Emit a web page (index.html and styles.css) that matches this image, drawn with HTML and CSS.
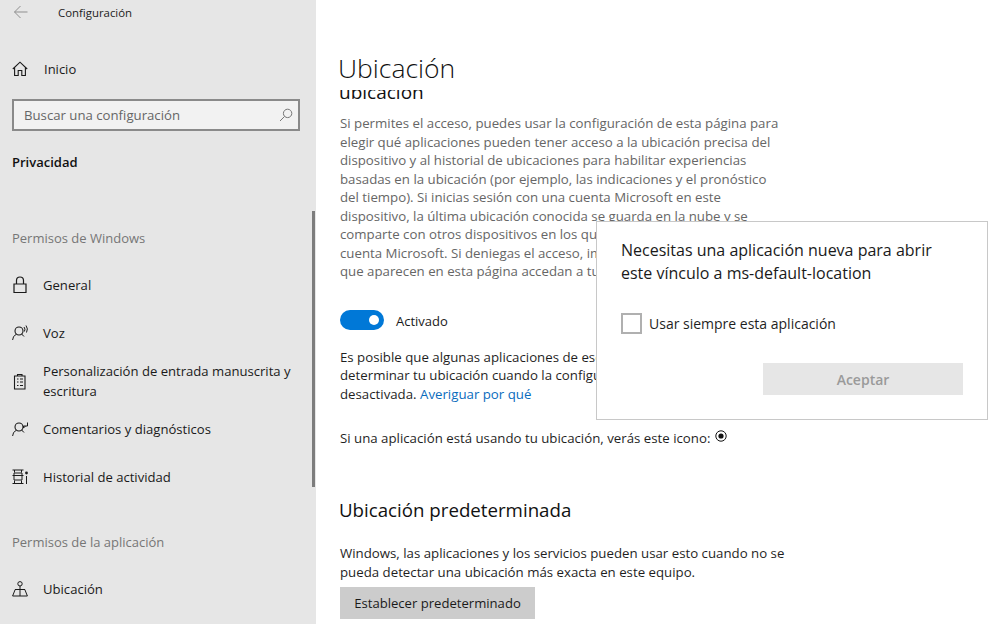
FILE: index.html
```html
<!DOCTYPE html>
<html lang="es">
<head>
<meta charset="utf-8">
<title>Configuración</title>
<link rel="stylesheet" href="styles.css">
</head>
<body>
<div class="app">
  <aside class="sidebar">
    <div class="titlebar">
      <svg class="back" width="16" height="14" viewBox="0 0 16 14"><path d="M14.5 7H1.5M7.5 1 1.5 7l6 6" fill="none" stroke="#8f8f8f" stroke-width="1"/></svg>
      <span class="apptitle">Configuración</span>
    </div>
    <a class="home">
      <svg class="ico" width="16" height="16" viewBox="0 0 16 16"><path d="M.8 8 8 1.2 15.2 8M2.6 6.4V14.5H6.2V9.5H9.8V14.5H13.4V6.4" fill="none" stroke="#1a1a1a" stroke-width="1.1"/></svg>
      <span>Inicio</span>
    </a>
    <div class="search">
      <span>Buscar una configuración</span>
      <svg width="14" height="14" viewBox="0 0 14 14"><circle cx="8.6" cy="5.4" r="4.2" fill="none" stroke="#777" stroke-width="1"/><path d="M5.6 8.4 1 13" stroke="#777" stroke-width="1"/></svg>
    </div>
    <div class="section-name">Privacidad</div>
    <div class="group group-first">Permisos de Windows</div>
    <a class="item item-general">
      <svg class="ico" width="16" height="18" viewBox="0 0 16 18"><path d="M2 8H14V16.5H2ZM4.5 8V4.5A3.5 3.5 0 0 1 11.5 4.5V8" fill="none" stroke="#1a1a1a" stroke-width="1.2"/></svg>
      <span>General</span>
    </a>
    <a class="item item-voz">
      <svg class="ico" width="16" height="16" viewBox="0 0 16 16"><circle cx="7" cy="6" r="4" fill="none" stroke="#1a1a1a" stroke-width="1.1"/><path d="M.6 15A6.5 6.5 0 0 1 4.4 9.2M9.6 9.2A6.5 6.5 0 0 1 12 11.5M12 2A4 4 0 0 1 12.4 6.5M14 .5A6.5 6.5 0 0 1 14.5 7.5" fill="none" stroke="#1a1a1a" stroke-width="1"/></svg>
      <span>Voz</span>
    </a>
    <a class="item item-ink">
      <svg class="ico" width="16" height="17" viewBox="0 0 16 17"><path d="M2.5 3H13V16H2.5ZM5.5 3V1.5H10V3M5 6H6.5M8 6H11M5 9H6.5M8 9H11M5 12.5H6.5M8 12.5H11" fill="none" stroke="#1a1a1a" stroke-width="1.1"/></svg>
      <span>Personalización de entrada manuscrita y escritura</span>
    </a>
    <a class="item item-feedback">
      <svg class="ico" width="16" height="16" viewBox="0 0 16 16"><circle cx="7" cy="6" r="4" fill="none" stroke="#1a1a1a" stroke-width="1.1"/><path d="M.6 15A6.5 6.5 0 0 1 4.4 9.2M9.6 9.2A6.5 6.5 0 0 1 12 11.5M11.5 5H15.5V1.5M11.5 5V7L13.5 5" fill="none" stroke="#1a1a1a" stroke-width="1"/></svg>
      <span>Comentarios y diagnósticos</span>
    </a>
    <a class="item item-history">
      <svg class="ico" width="16" height="16" viewBox="0 0 16 16"><path d="M.5 1H11.5M2.5 1V3.5M9.5 1V3.5M2 4H10V11H2ZM.5 6.5H11.5M.5 14.5H11.5M2.5 11.5V14.5M9.5 11.5V14.5M14.5 7V15" fill="none" stroke="#1a1a1a" stroke-width="1"/><circle cx="14.5" cy="4" r="1.4" fill="#1a1a1a"/></svg>
      <span>Historial de actividad</span>
    </a>
    <div class="group group-app">Permisos de la aplicación</div>
    <a class="item item-loc">
      <svg class="ico" width="16" height="16" viewBox="0 0 16 16"><circle cx="8" cy="2.8" r="2.2" fill="none" stroke="#1a1a1a" stroke-width="1"/><path d="M8 5V15M3 8.5H13M3.2 8.5.6 15H15.4L12.8 8.5" fill="none" stroke="#1a1a1a" stroke-width="1"/></svg>
      <span>Ubicación</span>
    </a>
    <div class="scrollbar"></div>
  </aside>
  <main class="main">
    <h1 class="page-title">Ubicación</h1>
    <div class="scroller">
      <div class="content">
        <h2 class="cut-heading">ubicación</h2>
        <p class="para muted para-intro">Si permites el acceso, puedes usar la configuración de esta página para<br>elegir qué aplicaciones pueden tener acceso a la ubicación precisa del<br>dispositivo y al historial de ubicaciones para habilitar experiencias<br>basadas en la ubicación (por ejemplo, las indicaciones y el pronóstico<br>del tiempo). Si inicias sesión con una cuenta Microsoft en este<br>dispositivo, la última ubicación conocida se guarda en la nube y se<br>comparte con otros dispositivos en los que hayas iniciado sesión con tu<br>cuenta Microsoft. Si deniegas el acceso, impides que las aplicaciones<br>que aparecen en esta página accedan a tu ubicación.</p>
        <div class="toggle-row">
          <span class="toggle"><span class="knob"></span></span>
          <span class="toggle-label">Activado</span>
        </div>
        <p class="para para-note">Es posible que algunas aplicaciones de escritorio puedan seguir<br>determinar tu ubicación cuando la configuración esté<br>desactivada. <a class="link">Averiguar por qué</a></p>
        <p class="para para-icon">Si una aplicación está usando tu ubicación, verás este icono:
          <svg class="loc-dot" width="12" height="12" viewBox="0 0 12 12"><circle cx="6" cy="6" r="5.2" fill="none" stroke="#111" stroke-width="1"/><circle cx="6" cy="6" r="2.6" fill="#111"/></svg>
        </p>
        <h2 class="subhead">Ubicación predeterminada</h2>
        <p class="para para-default">Windows, las aplicaciones y los servicios pueden usar esto cuando no se<br>pueda detectar una ubicación más exacta en este equipo.</p>
        <button class="default-btn">Establecer predeterminado</button>
      </div>
    </div>
  </main>
</div>
<div class="dialog">
  <div class="dialog-title">Necesitas una aplicación nueva para abrir este vínculo a ms-default-location</div>
  <label class="check-row"><span class="check"></span><span>Usar siempre esta aplicación</span></label>
  <div class="dialog-foot"><button class="accept">Aceptar</button></div>
</div>
</body>
</html>
```
FILE: styles.css
```css
* { box-sizing: border-box; }
html, body { margin: 0; padding: 0; height: 100%; overflow: hidden; background: #fff; }
body { font-family: "Open Sans", "Noto Sans", sans-serif; font-size: 13px; color: #1a1a1a; }
.app { display: flex; height: 624px; }
.sidebar { position: relative; width: 316px; flex: none; background: #e6e6e6; padding: 0 12px; overflow: hidden; }
.titlebar { display: flex; align-items: center; height: 24px; }
.back { margin: 0 0 0 1px; }
.apptitle { margin-left: 29px; font-size: 11.4px; color: #222; }
.home { display: flex; align-items: center; margin-top: 33px; height: 24px; font-size: 13px; }
.home span { margin-left: 16px; }
.ico { flex: none; }
.search { display: flex; align-items: center; justify-content: space-between; height: 32px; margin-top: 18px; width: 288px; padding: 0 5px 0 10px; background: #f2f2f2; border: 2px solid #8a8a8a; color: #666; font-size: 13.2px; }
.section-name { margin-top: 22px; font-weight: 600; font-size: 13px; color: #111; line-height: 18px; }
.group { color: #767676; font-size: 13px; line-height: 18px; }
.group-first { margin-top: 58px; }
.group-app { margin-top: 46px; }
.item { display: flex; align-items: center; font-size: 13.1px; line-height: 20px; }
.item span { margin-left: 15px; }
.item-general { margin-top: 28px; }
.item-voz { margin-top: 28px; }
.item-ink { margin-top: 18px; }
.item-ink span { width: 258px; }
.item-feedback { margin-top: 18px; }
.item-history { margin-top: 28px; }
.item-loc { margin-top: 28px; }
.scrollbar { position: absolute; right: 1px; top: 211px; width: 3px; height: 276px; background: #7d7d7d; }
.main { flex: 1; padding-left: 22px; min-width: 0; }
.page-title { margin: 0; padding-top: 49px; height: 90px; font-size: 26.5px; font-weight: 300; line-height: 38px; color: #111; }
.scroller { height: 534px; overflow: hidden; padding-left: 1px; }
.content { margin-top: -11px; }
.cut-heading { margin: 0; font-size: 19px; font-weight: 400; line-height: 26px; color: #111; }
.para { margin: 0 0 0 1px; font-size: 13.25px; line-height: 18.5px; color: #1f1f1f; white-space: nowrap; }
.muted { color: #666; }
.para-intro { margin-top: 9px; }
.toggle-row { display: flex; align-items: center; margin: 29px 0 0 1px; height: 20px; }
.toggle { display: flex; align-items: center; justify-content: flex-end; width: 44px; height: 20px; border-radius: 10px; background: #0078d7; padding-right: 5px; }
.knob { width: 10px; height: 10px; border-radius: 50%; background: #fff; }
.toggle-label { margin-left: 12px; font-size: 13px; position: relative; top: 1px; }
.para-note { margin-top: 18.3px; }
.link { color: #0a6cbd; }
.para-icon { margin-top: 25.7px; }
.loc-dot { vertical-align: 1px; margin-left: 1px; }
.subhead { margin: 50px 0 0; font-size: 18.7px; font-weight: 400; line-height: 26px; color: #111; }
.para-default { margin-top: 21px; }
.default-btn { display: block; margin: 6px 0 0 1px; width: 195px; height: 32px; border: 0; background: #cccccc; font-family: inherit; font-size: 13.1px; color: #1a1a1a; padding: 0; }
.dialog { position: absolute; left: 596px; top: 221px; width: 392px; height: 199px; background: #fff; border: 1px solid #c8c8c8; padding: 17px 24px 0; }
.dialog-title { font-size: 16px; line-height: 23px; width: 330px; color: #1a1a1a; }
.check-row { display: flex; align-items: center; margin-top: 28px; font-size: 14px; color: #1f1f1f; }
.check { width: 21px; height: 21px; border: 2px solid #b0b0b0; margin-right: 7px; }
.dialog-foot { display: flex; justify-content: flex-end; margin-top: 29px; }
.accept { width: 200px; height: 32px; border: 0; background: #e6e6e6; color: #9a9a9a; font-family: inherit; font-weight: 600; font-size: 14px; }
```
